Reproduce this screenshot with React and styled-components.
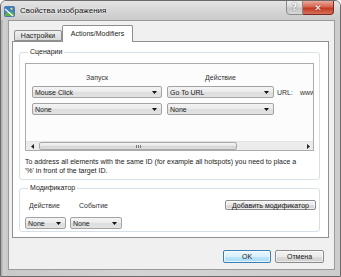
import React from "react";
import styled, { createGlobalStyle } from "styled-components";

const Global = createGlobalStyle`
  html, body { margin: 0; padding: 0; background: #ffffff; }
  * { box-sizing: border-box; }
`;

const FONT = `"Liberation Sans", "DejaVu Sans", Arial, sans-serif`;

const Window = styled.div`
  width: 341px;
  height: 277px;
  display: flex;
  flex-direction: column;
  border: 1px solid #6b6b6b;
  border-radius: 6px 6px 0 0;
  background: linear-gradient(to right, #a9a9a9 0px, #d2d2d2 3px, #c9c9c9 6px, #d4d4d4 40%, #cdcdcd 100%);
  box-shadow: inset 0 1px 0 #f4f4f4;
  font-family: ${FONT};
  color: #1b1b1b;
  overflow: hidden;
`;

const TitleBar = styled.div`
  height: 19px;
  display: flex;
  align-items: center;
  padding: 0 6px 0 3px;
  background: linear-gradient(to bottom, #e4e4e4, #d3d3d3 60%, #cbcbcb);
`;

const TitleText = styled.span`
  font-size: 8px;
  margin-left: 5px;
  color: #111;
  text-shadow: 0 0 3px #ffffff, 0 0 2px #ffffff;
  flex: 1;
`;

const CaptionGroup = styled.div`
  display: flex;
  align-self: flex-start;
  margin-top: -1px;
`;

const CaptionButton = styled.div`
  width: ${(p) => p.$w}px;
  height: 15px;
  display: flex;
  align-items: center;
  justify-content: center;
  border: 1px solid ${(p) => (p.$close ? "#7a2a1e" : "#8a8a8a")};
  border-left-width: ${(p) => (p.$close ? 0 : 1)}px;
  border-radius: ${(p) => (p.$close ? "0 0 4px 0" : "0 0 0 4px")};
  background: ${(p) =>
    p.$close
      ? "linear-gradient(to bottom, #e9a99b, #d7644f 45%, #c23a22 55%, #d8705a)"
      : "linear-gradient(to bottom, #eeeeee, #d8d8d8 45%, #c6c6c6 55%, #d8d8d8)"};
  color: #fff;
  font-family: "DejaVu Sans", sans-serif;
  font-weight: bold;
  font-size: ${(p) => (p.$close ? 9 : 8)}px;
  text-shadow: 0 0 2px ${(p) => (p.$close ? "#7a2010" : "#555")};
`;

const Client = styled.div`
  flex: 1;
  margin: 0 5px 6px 7px;
  background: #f0f0f0;
  border: 1px solid #9a9a9a;
  display: flex;
  flex-direction: column;
  padding: 4px 4px 0 3px;
`;

const TabStrip = styled.div`
  display: flex;
  align-items: flex-end;
  height: 16px;
  padding-left: 2px;
  position: relative;
  z-index: 1;
`;

const Tab = styled.div`
  height: ${(p) => (p.$active ? 17 : 11)}px;
  margin-bottom: ${(p) => (p.$active ? -1 : 0)}px;
  width: ${(p) => p.$w}px;
  border: 1px solid #8e8f8f;
  border-bottom: ${(p) => (p.$active ? "none" : "1px solid #8e8f8f")};
  border-left: ${(p) => (p.$active || p.$first ? "1px solid #8e8f8f" : "none")};
  border-radius: 2px 2px 0 0;
  background: ${(p) => (p.$active ? "#ffffff" : "linear-gradient(to bottom, #f2f2f2, #e3e3e3 50%, #d9d9d9)")};
  font-size: 7px;
  display: flex;
  align-items: ${(p) => (p.$active ? "flex-start" : "center")};
  padding-top: ${(p) => (p.$active ? 4 : 0)}px;
  justify-content: center;
  color: #222;
`;

const Panel = styled.div`
  width: 317px;
  height: 197px;
  border: 1px solid #8e8f8f;
  background: #ffffff;
  padding: 6px 0 0 6px;
  display: flex;
  flex-direction: column;
  gap: 4px;
`;

const Group = styled.fieldset`
  margin: 0;
  width: 301px;
  min-width: 0;
  border: 1px solid #d5dfe5;
  border-radius: 3px;
  padding: ${(p) => p.$pad};
  min-inline-size: 0;
`;

const Legend = styled.legend`
  font-size: 7px;
  line-height: 8px;
  padding: 0 2px;
  margin-left: 3px;
  color: #222;
`;

const ListBox = styled.div`
  width: 289px;
  height: 88px;
  border: 1px solid #a9abae;
  background: #fcfcfc;
  display: flex;
  flex-direction: column;
  overflow: hidden;
  white-space: nowrap;
`;

const ListContent = styled.div`
  padding: 9px 0 0 6px;
  display: grid;
  grid-template-columns: 130px 107px max-content;
  column-gap: 5px;
  row-gap: 5px;
  align-items: center;
`;

const ColHeader = styled.div`
  font-size: 7px;
  line-height: 9px;
  text-align: center;
  color: #333;
  margin-bottom: -1px;
`;

const Combo = styled.div`
  width: ${(p) => (p.$w ? `${p.$w}px` : "auto")};
  height: 12px;
  border: 1px solid #a3a3a3;
  border-radius: 2px;
  background: linear-gradient(to bottom, #f4f4f4, #ebebeb 50%, #dddddd 51%, #e3e3e3);
  display: flex;
  align-items: center;
  padding: 0 4px 0 2px;
  font-size: 7px;
  color: #1a1a1a;
`;

const ComboText = styled.span`
  flex: 1;
  overflow: hidden;
`;

const Arrow = () => (
  <svg width="5" height="3" viewBox="0 0 5 3">
    <path d="M0 0 L5 0 L2.5 3 Z" fill="#111" />
  </svg>
);

const UrlCell = styled.div`
  display: flex;
  align-items: center;
  font-size: 7px;
  color: #333;
  gap: 7px;
  margin-left: -2px;
`;

const UrlInput = styled.span`
  font-size: 7px;
  color: #333;
`;

const ScrollBar = styled.div`
  margin-top: auto;
  height: 9px;
  display: flex;
  background: #ececec;
  border-top: 1px solid #e2e2e2;
`;

const ScrollArrow = styled.div`
  width: ${(p) => p.$w}px;
  display: flex;
  align-items: center;
  justify-content: center;
`;

const ScrollThumb = styled.div`
  width: 198px;
  border: 1px solid #a9a9a9;
  border-radius: 2px;
  background: linear-gradient(to bottom, #f3f3f3, #e6e6e6 50%, #d6d6d6 51%, #dedede);
  display: flex;
  align-items: center;
  justify-content: center;
`;

const Grip = styled.div`
  width: 5px;
  height: 3px;
  border-left: 1px solid #777;
  border-right: 1px solid #777;
  background: linear-gradient(to right, transparent 1px, #777 1px, #777 2px, transparent 2px);
`;

const ScrollTrack = styled.div`
  flex: 1;
`;

const SmallTri = ({ dir }) => (
  <svg width="3" height="5" viewBox="0 0 3 5">
    <path d={dir === "left" ? "M3 0 L3 5 L0 2.5 Z" : "M0 0 L0 5 L3 2.5 Z"} fill="#222" />
  </svg>
);

const Note = styled.div`
  font-size: 7px;
  line-height: 9px;
  margin-top: 6px;
  color: #222;
  white-space: nowrap;
`;

const ModRow = styled.div`
  display: flex;
  align-items: flex-start;
  padding-top: 8px;
`;

const Field = styled.div`
  display: flex;
  flex-direction: column;
  gap: 7px;
  margin-right: 4px;
`;

const FieldLabel = styled.div`
  font-size: 7px;
  line-height: 9px;
  padding-left: ${(p) => p.$indent}px;
  margin-top: 1px;
  color: #333;
`;

const Spacer = styled.div`
  flex: 1;
`;

const Button = styled.div`
  width: ${(p) => p.$w}px;
  height: ${(p) => p.$h}px;
  border: 1px solid ${(p) => (p.$focus ? "#3c7fb1" : "#8b8b8b")};
  border-radius: 2px;
  background: ${(p) =>
    p.$focus
      ? "linear-gradient(to bottom, #eaf6fd, #d9f0fc 50%, #bee6fd 51%, #a7d9f5)"
      : "linear-gradient(to bottom, #f2f2f2, #ebebeb 50%, #dddddd 51%, #cfcfcf)"};
  box-shadow: inset 0 0 0 1px ${(p) => (p.$focus ? "rgba(255,255,255,0.7)" : "rgba(255,255,255,0.6)")};
  font-size: 7px;
  display: flex;
  align-items: center;
  justify-content: center;
  color: #1a1a1a;
  margin-right: ${(p) => p.$mr || 0}px;
`;

const Footer = styled.div`
  display: flex;
  justify-content: flex-end;
  gap: 4px;
  padding: 12px 6px 0 0;
`;

const AppIcon = () => (
  <svg width="11" height="12" viewBox="0 0 11 12">
    <rect x="0.5" y="1.5" width="10" height="10" rx="1" fill="#3b7fc4" stroke="#2a5d91" strokeWidth="0.6" />
    <path d="M1 9 L4 6 L6 8 L8 6 L10 9 L10 11 L1 11 Z" fill="#5fb04a" />
    <path d="M1 4 L9 11" stroke="#ffffff" strokeWidth="1.3" />
    <circle cx="7.5" cy="3.8" r="1.1" fill="#f4e16a" />
  </svg>
);

export default function App() {
  return (
    <>
      <Global />
      <Window>
        <TitleBar>
          <AppIcon />
          <TitleText>Свойства изображения</TitleText>
          <CaptionGroup>
            <CaptionButton $w={17}>?</CaptionButton>
            <CaptionButton $w={31} $close>
              ✕
            </CaptionButton>
          </CaptionGroup>
        </TitleBar>
        <Client>
          <TabStrip>
            <Tab $w={48} $first>
              Настройки
            </Tab>
            <Tab $w={71} $active>
              Actions/Modifiers
            </Tab>
          </TabStrip>
          <Panel>
            <Group $pad="7px 5px 4px 5px">
              <Legend>Сценарии</Legend>
              <ListBox>
                <ListContent>
                  <ColHeader>Запуск</ColHeader>
                  <ColHeader>Действие</ColHeader>
                  <div />
                  <Combo $w={130}>
                    <ComboText>Mouse Click</ComboText>
                    <Arrow />
                  </Combo>
                  <Combo $w={107}>
                    <ComboText>Go To URL</ComboText>
                    <Arrow />
                  </Combo>
                  <UrlCell>
                    URL:
                    <UrlInput>www.anoraks.ru</UrlInput>
                  </UrlCell>
                  <Combo $w={130}>
                    <ComboText>None</ComboText>
                    <Arrow />
                  </Combo>
                  <Combo $w={107}>
                    <ComboText>None</ComboText>
                    <Arrow />
                  </Combo>
                  <div />
                </ListContent>
                <ScrollBar>
                  <ScrollArrow $w={13}>
                    <SmallTri dir="left" />
                  </ScrollArrow>
                  <ScrollThumb>
                    <Grip />
                  </ScrollThumb>
                  <ScrollTrack />
                  <ScrollArrow $w={9}>
                    <SmallTri dir="right" />
                  </ScrollArrow>
                </ScrollBar>
              </ListBox>
              <Note>
                To address all elements with the same ID (for example all hotspots) you need to place a
                <br />
                '%' in front of the target ID.
              </Note>
            </Group>
            <Group $pad="0 2px 2px 5px">
              <Legend>Модификатор</Legend>
              <ModRow>
                <Field>
                  <FieldLabel $indent={4}>Действие</FieldLabel>
                  <Combo $w={41}>
                    <ComboText>None</ComboText>
                    <Arrow />
                  </Combo>
                </Field>
                <Field>
                  <FieldLabel $indent={9}>Событие</FieldLabel>
                  <Combo $w={52}>
                    <ComboText>None</ComboText>
                    <Arrow />
                  </Combo>
                </Field>
                <Spacer />
                <Button $w={91} $h={10} $mr={1}>
                  Добавить модификатор
                </Button>
              </ModRow>
            </Group>
          </Panel>
          <Footer>
            <Button $w={48} $h={13} $focus>
              OK
            </Button>
            <Button $w={49} $h={13}>
              Отмена
            </Button>
          </Footer>
        </Client>
      </Window>
    </>
  );
}
